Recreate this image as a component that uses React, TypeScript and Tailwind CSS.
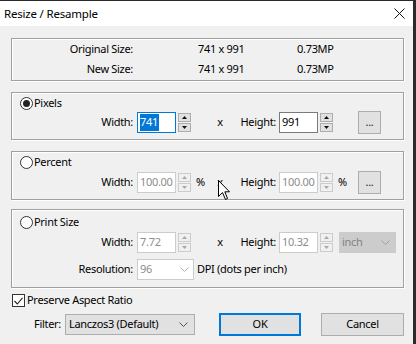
import React from "react";

const groupBox =
  "w-[393px] border border-[#a0a0a0] shadow-[inset_1px_1px_0_#ffffff,1px_1px_0_#ffffff]";

function Radio({ checked, label }: { checked?: boolean; label: string }) {
  return (
    <div className="flex h-[14px] items-center pl-[8px]">
      <span className="flex h-[13px] w-[13px] items-center justify-center rounded-full border border-[#333333] bg-white">
        {checked && <span className="h-[7px] w-[7px] rounded-full bg-[#222222]" />}
      </span>
      <span className="ml-[1px]">{label}</span>
    </div>
  );
}

function Arrow({ up, color }: { up?: boolean; color: string }) {
  return (
    <svg width="5" height="3" viewBox="0 0 5 3">
      <path d={up ? "M2.5 0 L5 3 L0 3 Z" : "M0 0 L5 0 L2.5 3 Z"} fill={color} />
    </svg>
  );
}

function Spinner({ disabled }: { disabled?: boolean }) {
  const b = disabled ? "border-[#cccccc] bg-[#f0f0f0]" : "border-[#adadad] bg-[#e1e1e1]";
  const c = disabled ? "#a8a8a8" : "#111111";
  return (
    <div className="flex w-[13px] flex-col gap-[1px]">
      <div className={`flex h-[9px] items-center justify-center border ${b}`}>
        <Arrow up color={c} />
      </div>
      <div className={`flex h-[9px] items-center justify-center border ${b}`}>
        <Arrow color={c} />
      </div>
    </div>
  );
}

function Field({
  value,
  disabled,
  focused,
  className,
}: {
  value: string;
  disabled?: boolean;
  focused?: boolean;
  className: string;
}) {
  const border = focused
    ? "border-[#0078d7]"
    : disabled
    ? "border-[#cccccc]"
    : "border-[#7a7a7a]";
  return (
    <div className={`flex h-[21px] items-center border bg-white pl-[2px] ${border} ${className}`}>
      {focused ? (
        <span className="bg-[#0078d7] pr-[1px] text-white">{value}</span>
      ) : (
        <span className={disabled ? "text-[#8c8c8c]" : "text-black"}>{value}</span>
      )}
    </div>
  );
}

function Chevron({ color }: { color: string }) {
  return (
    <svg width="9" height="5" viewBox="0 0 9 5">
      <path d="M0.5 0.5 L4.5 4.5 L8.5 0.5" fill="none" stroke={color} strokeWidth="1" />
    </svg>
  );
}

function DotsButton() {
  return (
    <div className="flex h-[23px] w-[23px] items-center justify-center border border-[#adadad] bg-[#e1e1e1] text-[#222]">
      ...
    </div>
  );
}

function SizeRow({
  w,
  h,
  disabled,
  focused,
  unit,
  tail,
}: {
  w: string;
  h: string;
  disabled?: boolean;
  focused?: boolean;
  unit?: string;
  tail: React.ReactNode;
}) {
  return (
    <div className="flex h-[21px] items-center">
      <span className="w-[121px] text-right">Width:</span>
      <Field value={w} disabled={disabled} focused={focused} className="ml-[4px] w-[39px]" />
      <div className="ml-[2px]">
        <Spinner disabled={disabled} />
      </div>
      <span className="w-[22px] pl-[5px]">{unit}</span>
      <span className="w-[14px] text-center">x</span>
      <span className="w-[49px] text-right">Height:</span>
      <Field value={h} disabled={disabled} className="ml-[3px] w-[39px]" />
      <div className="ml-[2px]">
        <Spinner disabled={disabled} />
      </div>
      {tail}
    </div>
  );
}

export default function App() {
  return (
    <div className="relative h-[344px] w-[416px] overflow-hidden bg-[#2b2b2b] font-['Noto_Sans',sans-serif] text-[11px] tracking-[-0.3px] text-black">
      <div className="mt-[1px] flex h-[343px] w-[413px] flex-col bg-[#f0f0f0]">
        <div className="flex h-[25px] items-center justify-between bg-white pl-[4px] pr-[8px] text-[11.5px] tracking-[-0.2px]">
          <span>Resize / Resample</span>
          <svg width="11" height="11" viewBox="0 0 11 11">
            <path d="M0.5 0.5 L10.5 10.5 M10.5 0.5 L0.5 10.5" stroke="#111" strokeWidth="1" />
          </svg>
        </div>

        <div className="flex flex-col pl-[11px]">
          <div className={`${groupBox} mt-[12px] flex h-[43px] flex-col justify-center`}>
            <div className="flex h-[20px] items-center">
              <span className="w-[121px] text-right">Original Size:</span>
              <span className="ml-[65px] w-[99px]">741 x 991</span>
              <span>0.73MP</span>
            </div>
            <div className="flex h-[20px] items-center">
              <span className="w-[121px] text-right">New Size:</span>
              <span className="ml-[65px] w-[99px]">741 x 991</span>
              <span>0.73MP</span>
            </div>
          </div>

          <div className={`${groupBox} mt-[11px] pb-[6px] pt-[3px]`}>
            <Radio checked label="Pixels" />
            <div className="mt-[2px]">
              <SizeRow
                w="741"
                h="991"
                focused
                tail={
                  <>
                    <span className="w-[25px]" />
                    <DotsButton />
                  </>
                }
              />
            </div>
          </div>

          <div className={`${groupBox} mt-[11px] pb-[6px] pt-[3px]`}>
            <Radio label="Percent" />
            <div className="mt-[3px]">
              <SizeRow
                w="100.00"
                h="100.00"
                disabled
                unit="%"
                tail={
                  <>
                    <span className="w-[25px] pl-[5px]">%</span>
                    <DotsButton />
                  </>
                }
              />
            </div>
          </div>

          <div className={`${groupBox} mt-[9px] pb-[7px] pt-[5px]`}>
            <Radio label="Print Size" />
            <div className="mt-[3px]">
              <SizeRow
                w="7.72"
                h="10.32"
                disabled
                tail={
                  <div className="ml-[6px] flex h-[21px] w-[57px] items-center justify-between border border-[#cccccc] bg-[#cccccc] pl-[2px] pr-[5px] text-[#838383]">
                    <span>inch</span>
                    <Chevron color="#a0a0a0" />
                  </div>
                }
              />
            </div>
            <div className="mt-[6px] flex h-[21px] items-center">
              <span className="w-[121px] text-right">Resolution:</span>
              <div className="ml-[4px] flex h-[21px] w-[57px] items-center justify-between border border-[#cccccc] bg-white pl-[2px] pr-[4px] text-[#8c8c8c]">
                <span>96</span>
                <Chevron color="#b4b4b4" />
              </div>
              <span className="ml-[3px]">DPI (dots per inch)</span>
            </div>
          </div>

          <div className="mt-[6px] flex h-[13px] items-center pl-[1px]">
            <span className="flex h-[13px] w-[13px] items-center justify-center border border-[#333333] bg-white">
              <svg width="9" height="8" viewBox="0 0 9 8">
                <path d="M0.5 4 L3.3 7 L8.5 0.8" fill="none" stroke="#222" strokeWidth="1.1" />
              </svg>
            </span>
            <span className="ml-[2px]">Preserve Aspect Ratio</span>
          </div>

          <div className="mt-[6px] flex h-[23px] items-center">
            <span className="w-[50px] text-right">Filter:</span>
            <div className="ml-[4px] flex h-[21px] w-[130px] items-center justify-between border border-[#adadad] bg-[#e1e1e1] pl-[3px] pr-[6px]">
              <span>Lanczos3 (Default)</span>
              <Chevron color="#555" />
            </div>
            <div className="ml-[24px] flex h-[23px] w-[82px] items-center justify-center border-2 border-[#0078d7] bg-[#e1e1e1]">
              OK
            </div>
            <div className="ml-[20px] flex h-[23px] w-[83px] items-center justify-center border border-[#adadad] bg-[#e1e1e1]">
              Cancel
            </div>
          </div>
        </div>
      </div>

      <svg
        className="absolute left-[218px] top-[180px]"
        width="13"
        height="21"
        viewBox="0 0 13 21"
      >
        <path
          d="M0.5 0.5 L0.5 16.5 L4.5 12.5 L7.5 19.5 L9.5 18.5 L6.8 11.8 L11.5 11.8 Z"
          fill="#fff"
          stroke="#000"
          strokeWidth="1"
          strokeLinejoin="round"
        />
      </svg>
    </div>
  );
}
